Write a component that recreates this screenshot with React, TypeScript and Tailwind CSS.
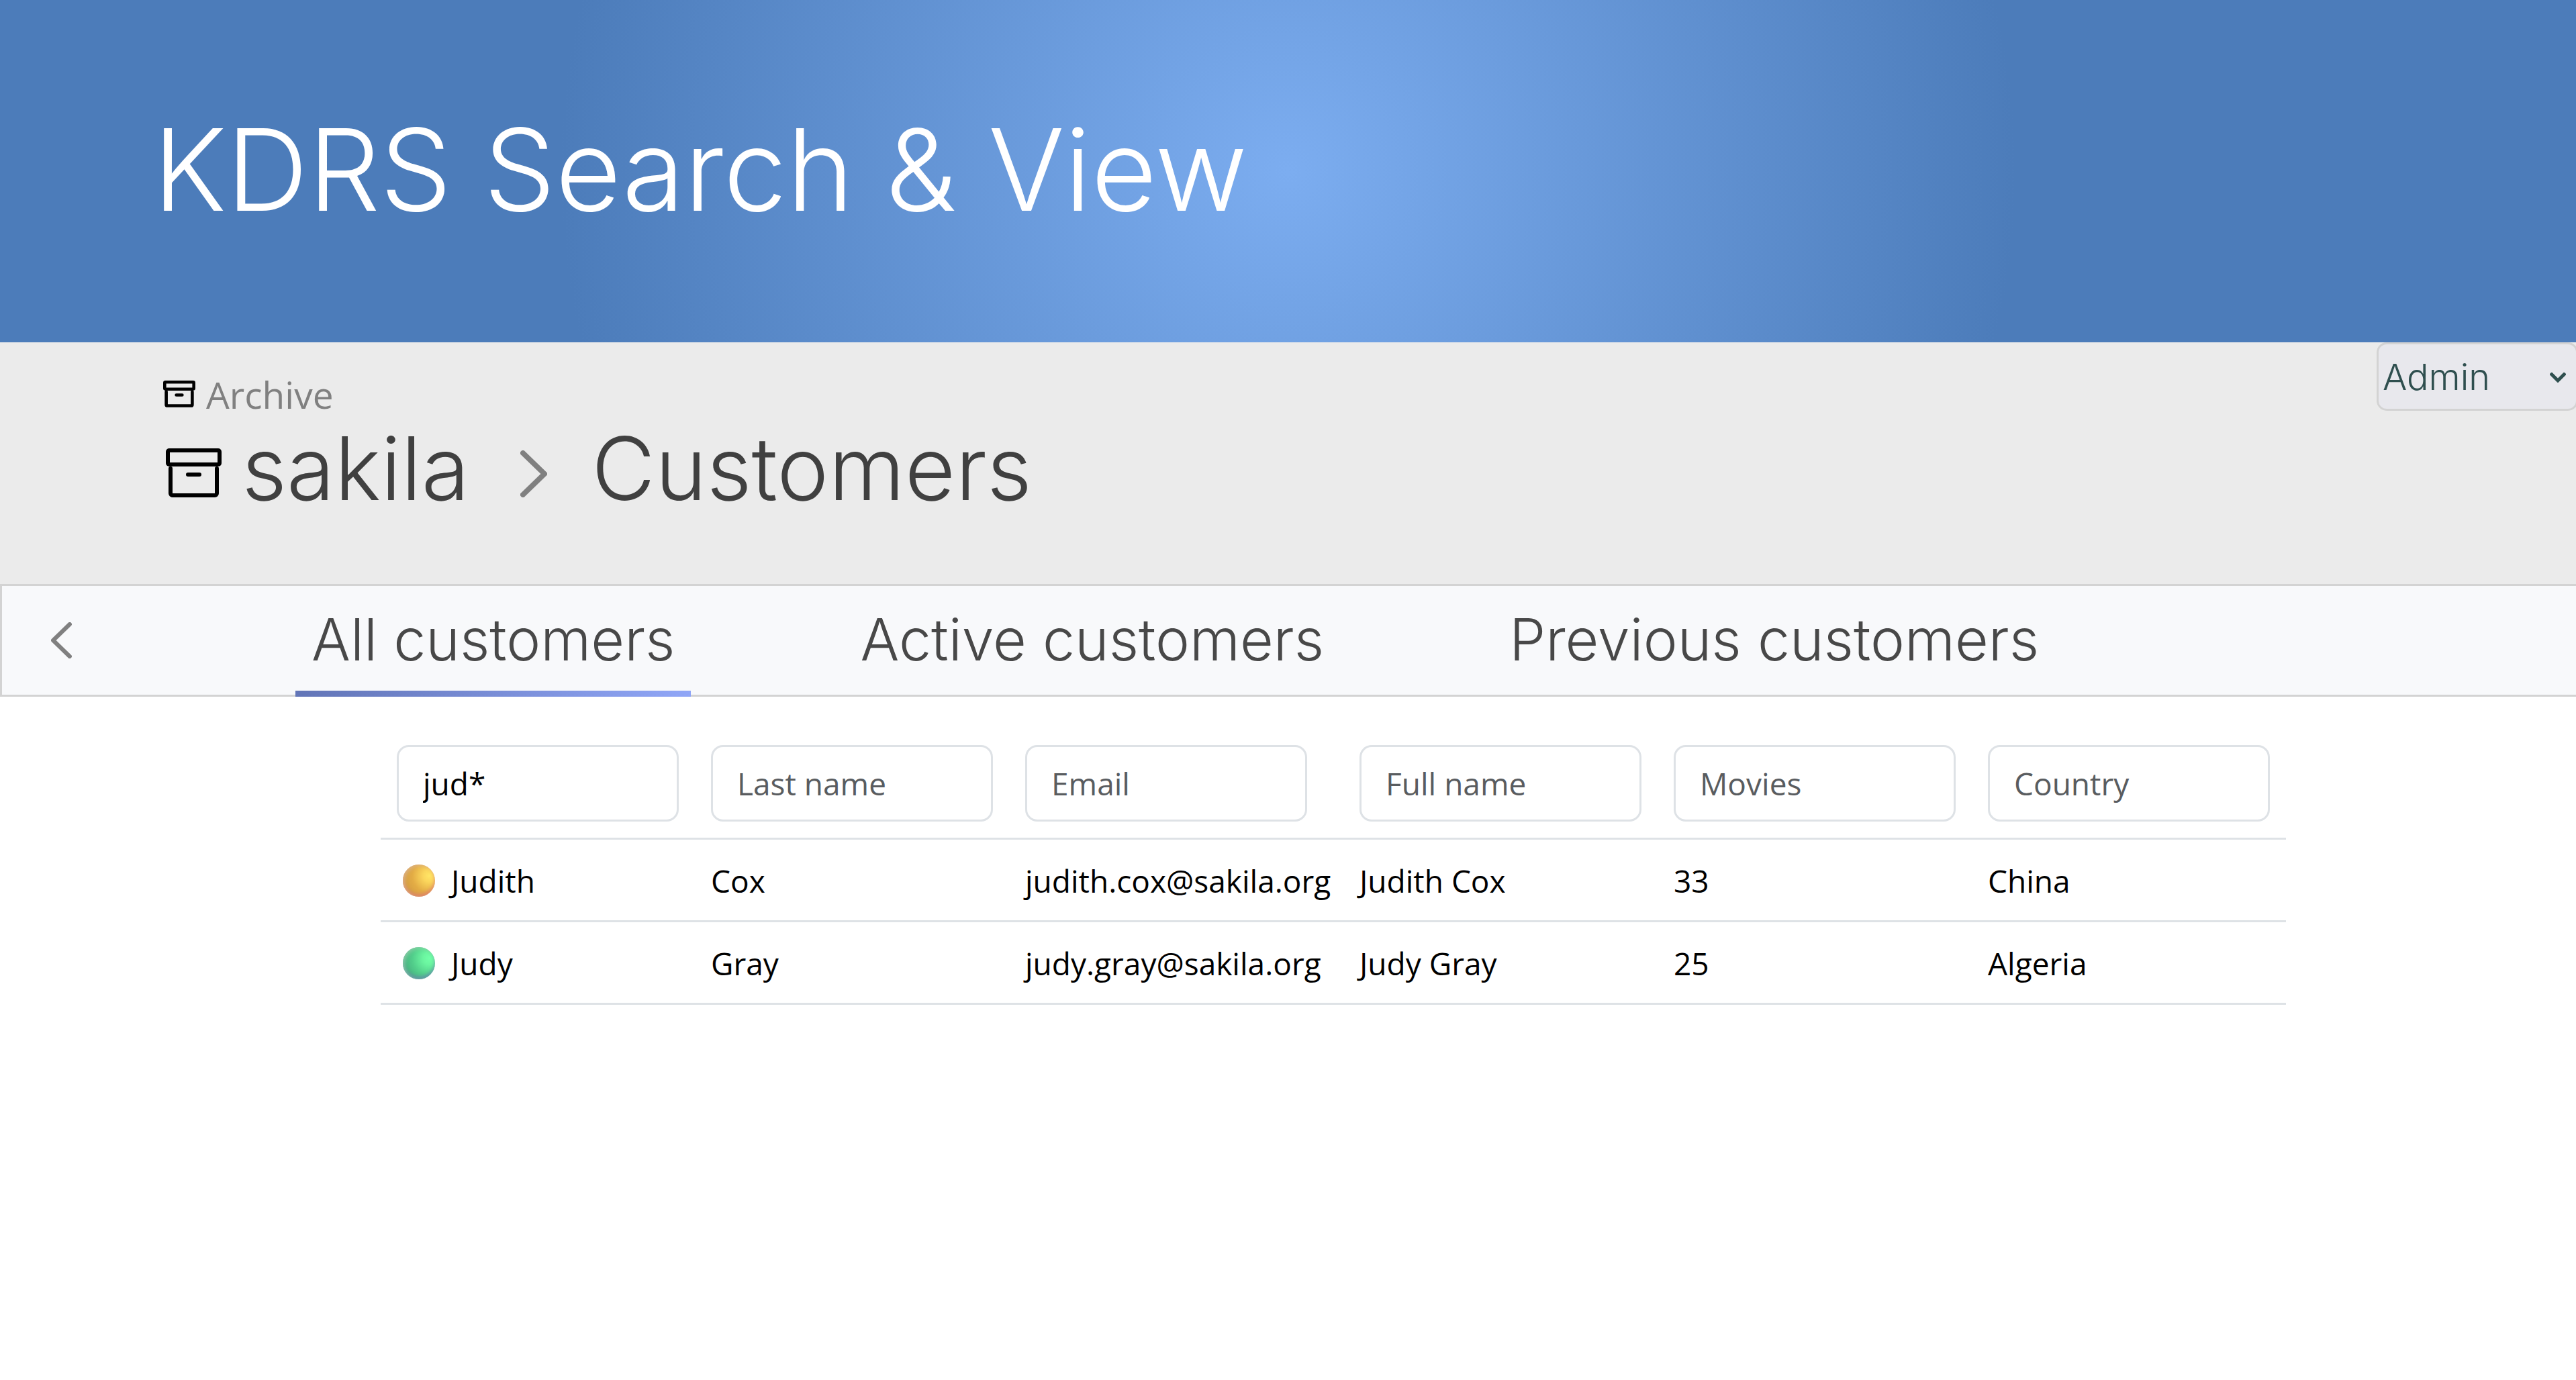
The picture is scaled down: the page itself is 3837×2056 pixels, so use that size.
import React, { useState } from "react";

type IconProps = { className?: string; strokeWidth: number };

function ArchiveIcon({ className, strokeWidth: w }: IconProps) {
  const h = w / 2;
  return (
    <svg
      viewBox="0 0 83 76"
      preserveAspectRatio="none"
      fill="none"
      stroke="currentColor"
      strokeWidth={w}
      strokeLinecap="round"
      strokeLinejoin="round"
      aria-hidden="true"
      className={className}
    >
      <rect x={h} y={h} width={83 - w} height={27 - w} rx="2" />
      <path d={`M${4 + h} ${30 + h}V${73 - h}a3 3 0 0 0 3 3h${69 - w}a3 3 0 0 0 3 -3V${30 + h}`} transform={`translate(0 ${-h})`} />
      <path d={`M${30 + h} 39H${53 - h}`} />
    </svg>
  );
}

function Chevron({ className, points }: { className?: string; points: string }) {
  return (
    <svg
      viewBox="0 0 40 70"
      fill="none"
      stroke="currentColor"
      strokeWidth="8"
      strokeLinecap="round"
      strokeLinejoin="round"
      aria-hidden="true"
      className={className}
    >
      <polyline points={points} />
    </svg>
  );
}

const tabs = ["All customers", "Active customers", "Previous customers"];

const columns = ["First name", "Last name", "Email", "Full name", "Movies", "Country"];

const rows = [
  {
    status:
      "bg-[radial-gradient(circle_at_82%_35%,#ffe566_0%,#fbd65c_18%,#e3ac45_50%,#d59f43_75%,#dba75c_100%)] shadow-[inset_3px_2px_5px_#dcb48acc,inset_0_-4px_5px_#e0707d99]",
    cells: ["Judith", "Cox", "judith.cox@sakila.org", "Judith Cox", "33", "China"],
  },
  {
    status:
      "bg-[radial-gradient(circle_at_82%_35%,#72ffa8_0%,#6bf5a0_18%,#52ce8b_50%,#48b481_75%,#5cc493_100%)] shadow-[inset_3px_2px_5px_#8fd0a8cc,inset_0_-4px_5px_#6a78b899]",
    cells: ["Judy", "Gray", "judy.gray@sakila.org", "Judy Gray", "25", "Algeria"],
  },
];

export default function App() {
  const [active, setActive] = useState(0);
  const [filters, setFilters] = useState(["jud*", "", "", "", "", ""]);

  return (
    <div className="min-h-screen bg-white font-['Open_Sans','Noto_Sans',sans-serif] text-black">
      <header className="flex h-[510px] items-center bg-[radial-gradient(circle,#7cadf0_0%,#4c7cba_56%)] px-[228px] pb-1">
        <h1 className="font-['Inter',sans-serif] text-[169px] leading-[200px] font-light whitespace-nowrap text-white">
          KDRS Search &amp; View
        </h1>
      </header>

      <section className="flex h-[360px] items-start justify-between bg-[#ebebeb] pl-[243px]">
        <div className="pt-[43px]">
          <a href="#archive" className="flex h-[70px] items-center gap-4 text-[#808080]">
            <ArchiveIcon className="h-[42px] w-[48px] text-black" strokeWidth={8} />
            <span className="text-[55px] leading-[70px]">Archive</span>
          </a>
          <div className="flex h-[150px] items-center pl-1 font-['Inter',sans-serif] text-[130px] leading-[150px] font-light text-[#404040]">
            <ArchiveIcon className="mt-4 h-[76px] w-[83px] text-black" strokeWidth={6} />
            <a href="#sakila" className="ml-[30px]">
              sakila
            </a>
            <Chevron className="mt-4 ml-[76px] h-[70px] w-[40px] text-[#808080]" points="4,4 36,35 4,66" />
            <h2 className="ml-[66px]">Customers</h2>
          </div>
        </div>

        <div className="relative -mr-[3px] h-[102px] w-[300px] shrink-0 text-[#2f4f4f]">
          <select
            aria-label="User role"
            className="size-full appearance-none rounded-[15px] border-[3px] border-[#d3d3d3] bg-[#e8e8ed] pl-1.5 font-['Inter',sans-serif] text-[54px] font-light"
          >
            <option>Admin</option>
          </select>
          <svg
            viewBox="0 0 24 15"
            fill="none"
            stroke="currentColor"
            strokeWidth="5"
            aria-hidden="true"
            className="pointer-events-none absolute top-[45px] right-[18px] h-[15px] w-[24px]"
          >
            <polyline points="1,1 12,12 23,1" />
          </svg>
        </div>
      </section>

      <nav className="flex h-[168px] border-[3px] border-r-0 border-[#d3d3d3] bg-[#f8f9fb]">
        <button type="button" aria-label="Back" className="flex w-[437px] items-center pl-[73px] text-[#808080]">
          <Chevron className="h-[54px] w-[31px]" points="36,4 4,35 36,66" />
        </button>
        <div className="-mb-[3px] flex gap-[228px]">
          {tabs.map((tab, i) => (
            <button
              key={tab}
              type="button"
              aria-pressed={i === active}
              onClick={() => setActive(i)}
              className="flex flex-col px-6 pt-1 font-['Inter',sans-serif] text-[86px] font-light whitespace-nowrap text-[#484848]"
            >
              <span className="flex-1 leading-[152px]">{tab}</span>
              <span
                className={
                  i === active ? "-mx-6 h-[9px] self-stretch bg-linear-to-r from-[#6275b7] to-[#90a6f7]" : "h-[9px]"
                }
              />
            </button>
          ))}
        </div>
      </nav>

      <main className="pt-[46px] pr-[432px] pl-[567px]">
        <table className="w-full table-fixed border-collapse text-left text-[46px] leading-[60px]">
          <thead>
            <tr className="h-[165px] border-b-[3px] border-[#dee2e6]">
              {columns.map((name, i) => (
                <th key={name} className={i === 2 ? "w-[498px] pt-[3px] pr-[54px] pl-6 font-normal" : "px-6 pt-[3px] font-normal"}>
                  <input
                    type="text"
                    aria-label={name}
                    placeholder={name}
                    value={filters[i]}
                    onChange={(e) => setFilters(filters.map((v, k) => (k === i ? e.target.value : v)))}
                    className="block h-[114px] w-full rounded-[18px] border-[3px] border-[#dee2e6] bg-white px-9 text-black placeholder:text-[#595c5f]"
                  />
                </th>
              ))}
            </tr>
          </thead>
          <tbody>
            {rows.map((row) => (
              <tr key={row.cells[0]} className="h-[123px] border-b-[3px] border-[#dee2e6]">
                {row.cells.map((cell, i) => (
                  <td key={columns[i]} className="pt-[3px] pl-6 whitespace-nowrap">
                    {i === 0 ? (
                      <span className="flex items-center gap-6 pl-[9px]">
                        <span className={`size-12 rounded-full ${row.status}`} />
                        {cell}
                      </span>
                    ) : (
                      cell
                    )}
                  </td>
                ))}
              </tr>
            ))}
          </tbody>
        </table>
      </main>
    </div>
  );
}
